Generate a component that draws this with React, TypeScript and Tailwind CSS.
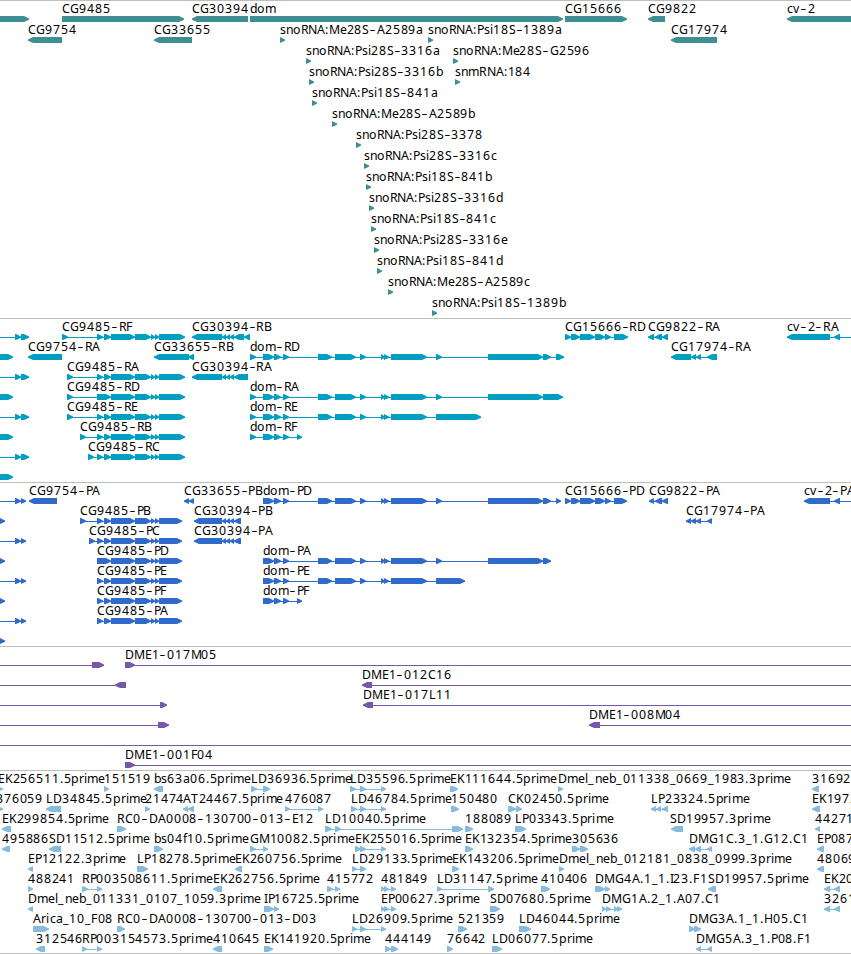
import React from "react";

type Feature = {
  label?: string;
  at?: number;
  dir: "R" | "L";
  exons: number[][];
  line?: [number, number];
};

// Advance widths in px of a 12px humanist sans, used to space the labels.
const ADVANCE: Record<string, number> = {
  "-": 7.9, ".": 4, ":": 3.8, _: 6.4, A: 8.2, B: 6.9, C: 8.3, D: 9.1, E: 6.8, F: 6.5, G: 9, H: 9, I: 3.6,
  K: 7.7, L: 7, M: 10.6, N: 9, P: 6.7, R: 7.5, S: 6.6, T: 7.3, a: 6.8, b: 7.4, c: 6.2, d: 7.4, e: 6.8,
  f: 4.2, i: 3.5, l: 3.5, m: 10.9, n: 7.3, o: 7.4, p: 7.6, r: 4.9, s: 5.9, v: 6.5,
};

// Splits a label at its dashes and gives each piece the x of every character in it.
function labelPieces(text: string, start: number) {
  let x = start;
  return text
    .split(/(-)/)
    .filter(Boolean)
    .map((piece) => {
      const xs = piece.split("").map((c) => {
        const here = Math.round(x);
        x += ADVANCE[c] ?? 7.85;
        return here;
      });
      return { piece, xs: xs.join(" ") };
    });
}

// "62-68 97-103" -> [[62, 68], [97, 103]]; a leading "~" marks a start beyond the left edge.
const spans = (s: string) =>
  s
    .split(" ")
    .filter(Boolean)
    .map((p) => {
      const [a, b] = p.split("-");
      return [a === "~" ? -12 : Number(a), Number(b)];
    });

const f = (label: string, dir: "R" | "L", s: string, line?: [number, number], at?: number): Feature => ({
  label,
  dir,
  exons: spans(s),
  line,
  at,
});

const tiny = (label: string, x: number) => f(label, "R", `${x}-${x + 5}`);

const genes: Feature[][] = [
  [
    f("", "R", "~-29"),
    f("CG9485", "R", "62-184"),
    f("CG30394", "L", "192-248"),
    f("dom", "R", "250-563"),
    f("CG15666", "R", "565-627"),
    f("CG9822", "L", "648-665"),
    f("cv-2", "L", "787-880"),
  ],
  [
    f("CG9754", "L", "28-62"),
    f("CG33655", "L", "154-192"),
    tiny("snoRNA:Me28S-A2589a", 280),
    tiny("snoRNA:Psi18S-1389a", 428),
    f("CG17974", "L", "671-717"),
  ],
  [tiny("snoRNA:Psi28S-3316a", 306), tiny("snoRNA:Me28S-G2596", 453)],
  [tiny("snoRNA:Psi28S-3316b", 309), tiny("snmRNA:184", 455)],
  [tiny("snoRNA:Psi18S-841a", 312)],
  [tiny("snoRNA:Me28S-A2589b", 332)],
  [tiny("snoRNA:Psi28S-3378", 356)],
  [tiny("snoRNA:Psi28S-3316c", 364)],
  [tiny("snoRNA:Psi18S-841b", 366)],
  [tiny("snoRNA:Psi28S-3316d", 369)],
  [tiny("snoRNA:Psi18S-841c", 371)],
  [tiny("snoRNA:Psi28S-3316e", 374)],
  [tiny("snoRNA:Psi18S-841d", 377)],
  [tiny("snoRNA:Me28S-A2589c", 388)],
  [tiny("snoRNA:Psi18S-1389b", 432)],
];

const body = "111-135 135-151 151-155 155-159 159-185";
const core = "97-103 104-111 " + body;
const pBody = "111-135 135-151 151-155 155-159 159-182";
const pCore = "97-103 104-111 " + pBody;
const domStart = "263-274 274-281 283-289";
const domMid = domStart + " 318-332 335-356 360-366 381-385 384-389 391-427";
const upA = () => f("", "R", "15-21 21-29", [-5, 29]);
const upP = () => f("", "R", "15-21 21-26", [-5, 26]);

const transcripts: Feature[][] = [
  [
    upA(),
    f("CG9485-RF", "R", "62-68 " + core),
    f("CG30394-RB", "L", "192-222 222-226 226-230 230-234 234-244 244-250"),
    f("CG15666-RD", "R", "565-571 571-580 580-595 595-605 605-611 614-628"),
    f("CG9822-RA", "L", "648-654 655-662 662-668"),
    f("cv-2-RA", "L", "787-830 834-840", [787, 860]),
  ],
  [
    f("", "R", "~-13"),
    f("CG9754-RA", "L", "28-62"),
    f("CG33655-RB", "L", "154-189 188-194"),
    f("dom-RD", "R", "250-256 " + domMid + " 436-442 488-543 543-551 556-564"),
    f("CG17974-RA", "L", "671-691 691-696 696-701 707-717"),
  ],
  [
    upA(),
    f("CG9485-RA", "R", "67-73 " + core),
    f("CG30394-RA", "L", "192-222 222-226 226-230 230-234 234-248"),
  ],
  [
    f("", "R", "~-13"),
    f("CG9485-RD", "R", "67-73 97-111 " + body),
    f("dom-RA", "R", "250-256 " + domMid + " 436-442 488-543 543-563"),
  ],
  [
    upA(),
    f("CG9485-RE", "R", "67-73 " + core),
    f("dom-RE", "R", "250-256 " + domMid + " 436-481"),
  ],
  [
    f("", "R", "~-13"),
    f("CG9485-RB", "R", "80-86 " + core),
    f("dom-RF", "R", "250-256 " + domStart + " 297-302"),
  ],
  [upA(), f("CG9485-RC", "R", "88-94 " + core)],
  [f("", "R", "~-13")],
];

const proteins: Feature[][] = [
  [
    upP(),
    f("CG9754-PA", "L", "29-57"),
    f("CG33655-PB", "L", "184-189 189-194"),
    f("dom-PD", "R", domMid + " 436-442 488-543 543-551 556-561"),
    f("CG15666-PD", "R", "565-571 571-580 580-595 595-605 605-611 614-627"),
    f("CG9822-PA", "L", "649-654 655-662 662-668"),
    f("cv-2-PA", "L", "804-830 834-840", [804, 860]),
  ],
  [
    f("", "R", "~-5"),
    f("CG9485-PB", "R", "80-86 " + pCore),
    f("CG30394-PB", "L", "194-222 222-226 226-230 230-234 234-241"),
    f("CG17974-PA", "L", "686-691 691-696 696-701 707-712"),
  ],
  [
    upP(),
    f("CG9485-PC", "R", "89-95 " + pCore),
    f("CG30394-PA", "L", "194-222 222-226 226-230 230-234 234-241"),
  ],
  [
    f("", "R", "~-5"),
    f("CG9485-PD", "R", "97-111 " + pBody),
    f("dom-PA", "R", domMid + " 436-442 488-543 543-551"),
  ],
  [upP(), f("CG9485-PE", "R", pCore), f("dom-PE", "R", domMid + " 436-465")],
  [f("", "R", "~-5"), f("CG9485-PF", "R", pCore), f("dom-PF", "R", domStart + " 297-302")],
  [upP(), f("CG9485-PA", "R", pCore)],
  [f("", "R", "~-5")],
];

const bacs: Feature[][] = [
  [f("", "R", "92-104", [-5, 100]), f("DME1-017M05", "R", "125-135", [130, 860])],
  [f("", "L", "115-126", [-5, 120]), f("DME1-012C16", "L", "362-372", [368, 860])],
  [f("", "R", "160-167", [-5, 163]), f("DME1-017L11", "L", "363-373", [368, 860])],
  [f("", "R", "158-169", [-5, 163]), f("DME1-008M04", "L", "589-600", [595, 860])],
  [f("", "R", "", [-5, 860])],
  [f("DME1-001F04", "R", "125-135", [130, 860])],
];

const ests: Feature[][] = [
  [
    f("EK256511.5prime", "R", "~-3", undefined, -2),
    f("151519", "R", "104-109"),
    f("bs63a06.5prime", "L", "154-163"),
    f("LD36936.5prime", "R", "251-257 263-270"),
    f("LD35596.5prime", "R", "350-356 360-366 381-386"),
    f("EK111644.5prime", "R", "450-458"),
    f("Dmel_neb_011338_0669_1983.3prime", "R", "558-563"),
    f("31692", "L", "812-819"),
  ],
  [
    f("376059", "R", "~-3", undefined, -4),
    f("LD34845.5prime", "L", "46-61"),
    f("21474", "R", "145-150"),
    f("AT24467.5prime", "L", "183-188 188-194"),
    f("476087", "R", "285-290 318-323"),
    f("LD46784.5prime", "R", "351-357 360-366 381-386"),
    f("150480", "R", "451-459"),
    f("CK02450.5prime", "R", "508-516 516-522"),
    f("LP23324.5prime", "L", "651-656 656-661 662-668"),
    f("EK19731", "L", "812-820"),
  ],
  [
    f("EK299854.5prime", "L", "2-11"),
    f("RC0-DA0008-130700-013-E12", "R", "117-126"),
    f("LD10040.5prime", "R", "325-332 335-341 452-463"),
    f("188089", "R", "465-473"),
    f("LP03343.5prime", "R", "515-526"),
    f("SD19957.3prime", "L", "671-683", undefined, 670),
    f("44271", "L", "815-820"),
  ],
  [
    f("495886", "L", "2-10"),
    f("SD11512.5prime", "L", "49-61"),
    f("bs04f10.5prime", "R", "154-163"),
    f("GM10082.5prime", "R", "250-256 263-268"),
    f("EK255016.5prime", "R", "355-361 360-366 381-386"),
    f("EK132354.5prime", "R", "465-473"),
    f("305636", "R", "572-580 580-588"),
    f("DMG1C.3_1.G12.C1", "L", "689-695 695-701 707-712"),
    f("EP0871", "L", "817-824"),
  ],
  [
    f("EP12122.3prime", "L", "28-33"),
    f("LP18278.5prime", "R", "137-148"),
    f("EK260756.5prime", "L", "235-242"),
    f("LD29133.5prime", "R", "352-357 360-366"),
    f("EK143206.5prime", "R", "452-459"),
    f("Dmel_neb_012181_0838_0999.3prime", "R", "559-564"),
    f("48069", "L", "817-824"),
  ],
  [
    f("488241", "R", "28-33"),
    f("RP003508611.5prime", "R", "82-88 97-102"),
    f("EK262756.5prime", "L", "213-222"),
    f("415772", "R", "327-333 335-340"),
    f("481849", "R", "381-385 384-389 391-396"),
    f("LD31147.5prime", "R", "437-442 488-494"),
    f("410406", "R", "541-550"),
    f("DMG4A.1_1.I23.F1", "R", "595-605 605-610"),
    f("SD19957.5prime", "L", "708-716"),
    f("EK20", "L", "824-830 834-840"),
  ],
  [
    f("Dmel_neb_011331_0107_1059.3prime", "L", "28-33"),
    f("IP16725.5prime", "R", "264-274 274-279"),
    f("EP00627.3prime", "R", "381-385 384-389 391-396"),
    f("SD07680.5prime", "R", "490-500"),
    f("DMG1A.2_1.A07.C1", "R", "602-606 606-611 614-618 617-622"),
    f("3261", "L", "824-830 834-840"),
  ],
  [
    f("Arica_10_F08", "R", "33-49"),
    f("RC0-DA0008-130700-013-D03", "R", "117-125"),
    f("LD26909.5prime", "R", "352-357 360-366 381-386"),
    f("521359", "R", "458-467"),
    f("LD46044.5prime", "R", "519-531"),
    f("DMG3A.1_1.H05.C1", "R", "689-695 694-701"),
  ],
  [
    f("312546", "L", "36-45"),
    f("RP003154573.5prime", "R", "82-87 97-102"),
    f("410645", "L", "213-222"),
    f("EK141920.5prime", "R", "264-273"),
    f("444149", "R", "385-391 391-398"),
    f("76642", "R", "447-453"),
    f("LD06077.5prime", "R", "492-502"),
    f("DMG5A.3_1.P08.F1", "L", "696-701 707-712"),
  ],
];

function arrow([a, b]: number[], dir: "R" | "L") {
  const t = Math.min(5, b - a);
  return dir === "R"
    ? `${a},15 ${b - t},15 ${b},17.4 ${b},18.8 ${b - t},21 ${a},21`
    : `${b},15 ${a + t},15 ${a},17.4 ${a},18.8 ${a + t},21 ${b},21`;
}

function Glyph({ feature }: { feature: Feature }) {
  const { exons, dir, label } = feature;
  const from = feature.line ? feature.line[0] : exons[0][0];
  const to = feature.line ? feature.line[1] : exons[exons.length - 1][1];
  const hasLine = feature.line || exons.length > 1;
  return (
    <g>
      {hasLine && <rect x={from} y={18} width={to - from} height={1} />}
      {exons.map((e, i) => (
        <polygon key={i} points={arrow(e, dir)} />
      ))}
      {label && (
        <text className="fill-black" y={12}>
          {labelPieces(label, feature.at ?? exons[0][0]).map(({ piece, xs }, i) =>
            piece === "-" ? (
              <tspan key={i} x={xs} y={13} className="font-['Inter',sans-serif] text-[15px] font-light">
                {piece}
              </tspan>
            ) : (
              <tspan key={i} x={xs} y={12}>
                {piece}
              </tspan>
            ),
          )}
        </text>
      )}
    </g>
  );
}

function Track({ rows, color, height, row = "h-5" }: { rows: Feature[][]; color: string; height: string; row?: string }) {
  return (
    <section className={`flex flex-col overflow-hidden border-t border-[#bebebe] ${height}`}>
      {rows.map((features, i) => (
        <svg key={i} width={851} height={20} className={`block shrink-0 overflow-visible ${row} ${color}`}>
          {features.map((feature, j) => (
            <Glyph key={j} feature={feature} />
          ))}
        </svg>
      ))}
    </section>
  );
}

export default function App() {
  return (
    <main className="flex h-[954px] w-[851px] flex-col overflow-hidden bg-white font-['Noto_Sans',sans-serif] text-[12.3px]">
      <Track rows={genes} color="fill-[#3e8e94]" height="h-[318px]" row="h-[21px]" />
      <Track rows={transcripts} color="fill-[#009ec1]" height="h-[164px]" />
      <Track rows={proteins} color="fill-[#306bcb]" height="h-[164px]" />
      <Track rows={bacs} color="fill-[#7558a8]" height="h-[124px]" />
      <Track rows={ests} color="fill-[#87bbdd]" height="h-[183px]" />
      <div className="h-px bg-[#bebebe]" />
    </main>
  );
}
